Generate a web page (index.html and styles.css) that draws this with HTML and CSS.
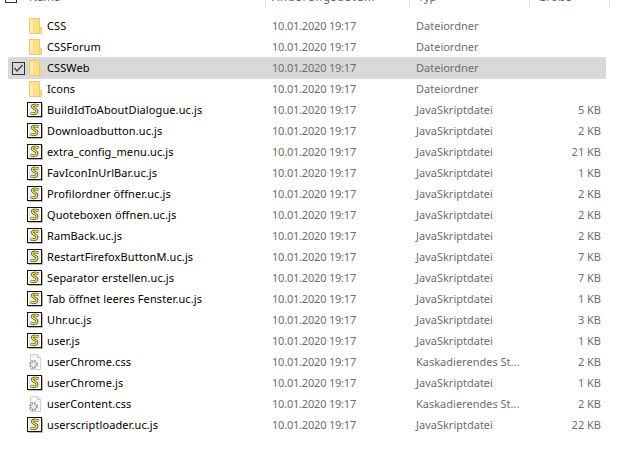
FILE: index.html
```html
<!DOCTYPE html>
<html lang="de">
<head>
    <meta charset="UTF-8">
    <title>Explorer</title>
    <link rel="stylesheet" href="styles.css">
</head>
<body>
    <svg class="defs" width="0" height="0">
        <symbol id="folder" viewBox="0 0 16 16">
            <path d="M2.500 .5H12.500V9.500H14.500V15.500H2.500Z" fill="#fde08a" stroke="#ecc870"/>
            <path d="M12.500 9.500V15.500" fill="none" stroke="#ecc870"/>
            <path d="M3 1H6V15H3Z" fill="#fee9ab"/>
        </symbol>
        <symbol id="script" viewBox="0 0 16 16">
            <rect x=".5" y=".5" width="14" height="14" fill="#fff" stroke="#111"/>
            <rect x="2" y="2" width="11" height="11" fill="#ececec"/>
            <path d="M15.500 1.500V15.500H1.500" fill="none" stroke="#b5b5b5"/>
            <path d="M11.500 3.500C8.500 2.500 5 3 5.500 5S10.500 7 10 9.500C9.500 12 6 12.500 3.500 11" fill="none" stroke="#222" stroke-width="2.600"/>
            <path d="M11.500 3.500C8.500 2.500 5 3 5.500 5S10.500 7 10 9.500C9.500 12 6 12.500 3.500 11" fill="none" stroke="#f2e84a" stroke-width="1.500"/>
        </symbol>
        <symbol id="cssfile" viewBox="0 0 16 16">
            <path d="M3.500 .5H10.500L13.500 3.500V15.500H3.500Z" fill="#f8f8f8" stroke="#cfcfcf"/>
            <path d="M10.500 .5V3.500H13.500" fill="none" stroke="#cfcfcf"/>
            <circle cx="6.500" cy="10.500" r="3.300" fill="none" stroke="#9b9b9b" stroke-width="2.400" stroke-dasharray="1.600 1"/>
            <circle cx="6.500" cy="10.500" r="1.200" fill="#e4e4e4"/>
        </symbol>
    </svg>

    <div class="list-header">
        <span class="head-check"></span>
        <span class="head-cell head-name">Name</span>
        <span class="head-cell head-date">Änderungsdatum</span>
        <span class="head-cell head-type">Typ</span>
        <span class="head-cell head-size">Größe</span>
    </div>

    <div class="file-list">
        <div class="file-row"><svg class="icon"><use href="#folder"/></svg><span class="name">CSS</span><span class="date">10.01.2020 19:17</span><span class="type">Dateiordner</span><span class="size"></span></div>
        <div class="file-row"><svg class="icon"><use href="#folder"/></svg><span class="name">CSSForum</span><span class="date">10.01.2020 19:17</span><span class="type">Dateiordner</span><span class="size"></span></div>
        <div class="file-row selected">
            <span class="check">
                <svg width="13" height="13" viewBox="0 0 13 13"><rect x=".5" y=".5" width="12" height="12" fill="none" stroke="#333"/><path d="M2.500 6L5 9L10.500 3" fill="none" stroke="#444" stroke-width="1.300"/></svg>
            </span>
            <svg class="icon"><use href="#folder"/></svg><span class="name">CSSWeb</span><span class="date">10.01.2020 19:17</span><span class="type">Dateiordner</span><span class="size"></span>
        </div>
        <div class="file-row"><svg class="icon"><use href="#folder"/></svg><span class="name">Icons</span><span class="date">10.01.2020 19:17</span><span class="type">Dateiordner</span><span class="size"></span></div>
        <div class="file-row"><svg class="icon"><use href="#script"/></svg><span class="name">BuildIdToAboutDialogue.uc.js</span><span class="date">10.01.2020 19:17</span><span class="type">JavaSkriptdatei</span><span class="size">5 KB</span></div>
        <div class="file-row"><svg class="icon"><use href="#script"/></svg><span class="name">Downloadbutton.uc.js</span><span class="date">10.01.2020 19:17</span><span class="type">JavaSkriptdatei</span><span class="size">2 KB</span></div>
        <div class="file-row"><svg class="icon"><use href="#script"/></svg><span class="name">extra_config_menu.uc.js</span><span class="date">10.01.2020 19:17</span><span class="type">JavaSkriptdatei</span><span class="size">21 KB</span></div>
        <div class="file-row"><svg class="icon"><use href="#script"/></svg><span class="name">FavIconInUrlBar.uc.js</span><span class="date">10.01.2020 19:17</span><span class="type">JavaSkriptdatei</span><span class="size">1 KB</span></div>
        <div class="file-row"><svg class="icon"><use href="#script"/></svg><span class="name">Profilordner öffner.uc.js</span><span class="date">10.01.2020 19:17</span><span class="type">JavaSkriptdatei</span><span class="size">2 KB</span></div>
        <div class="file-row"><svg class="icon"><use href="#script"/></svg><span class="name">Quoteboxen öffnen.uc.js</span><span class="date">10.01.2020 19:17</span><span class="type">JavaSkriptdatei</span><span class="size">2 KB</span></div>
        <div class="file-row"><svg class="icon"><use href="#script"/></svg><span class="name">RamBack.uc.js</span><span class="date">10.01.2020 19:17</span><span class="type">JavaSkriptdatei</span><span class="size">2 KB</span></div>
        <div class="file-row"><svg class="icon"><use href="#script"/></svg><span class="name">RestartFirefoxButtonM.uc.js</span><span class="date">10.01.2020 19:17</span><span class="type">JavaSkriptdatei</span><span class="size">7 KB</span></div>
        <div class="file-row"><svg class="icon"><use href="#script"/></svg><span class="name">Separator erstellen.uc.js</span><span class="date">10.01.2020 19:17</span><span class="type">JavaSkriptdatei</span><span class="size">7 KB</span></div>
        <div class="file-row"><svg class="icon"><use href="#script"/></svg><span class="name">Tab öffnet leeres Fenster.uc.js</span><span class="date">10.01.2020 19:17</span><span class="type">JavaSkriptdatei</span><span class="size">1 KB</span></div>
        <div class="file-row"><svg class="icon"><use href="#script"/></svg><span class="name">Uhr.uc.js</span><span class="date">10.01.2020 19:17</span><span class="type">JavaSkriptdatei</span><span class="size">3 KB</span></div>
        <div class="file-row"><svg class="icon"><use href="#script"/></svg><span class="name">user.js</span><span class="date">10.01.2020 19:17</span><span class="type">JavaSkriptdatei</span><span class="size">1 KB</span></div>
        <div class="file-row"><svg class="icon"><use href="#cssfile"/></svg><span class="name">userChrome.css</span><span class="date">10.01.2020 19:17</span><span class="type">Kaskadierendes St...</span><span class="size">2 KB</span></div>
        <div class="file-row"><svg class="icon"><use href="#script"/></svg><span class="name">userChrome.js</span><span class="date">10.01.2020 19:17</span><span class="type">JavaSkriptdatei</span><span class="size">1 KB</span></div>
        <div class="file-row"><svg class="icon"><use href="#cssfile"/></svg><span class="name">userContent.css</span><span class="date">10.01.2020 19:17</span><span class="type">Kaskadierendes St...</span><span class="size">2 KB</span></div>
        <div class="file-row"><svg class="icon"><use href="#script"/></svg><span class="name">userscriptloader.uc.js</span><span class="date">10.01.2020 19:17</span><span class="type">JavaSkriptdatei</span><span class="size">22 KB</span></div>
    </div>
</body>
</html>
```

FILE: styles.css
```css
html, body {
    height: 100%;
}

body {
    margin: 0;
    overflow: hidden;
    background-color: #fff;
    color: #000;
    font-family: "Noto Sans", "Open Sans", sans-serif;
    font-size: 11px;
}

.defs {
    display: block;
    height: 0;
}

/* header is cut by the top of the shot, only the bottom of it shows */
.list-header {
    display: flex;
    height: 8px;
    color: #4c607a;
    line-height: 14px;
}

.head-check {
    width: 12px;
    height: 3px;
    margin-left: 5px;
    flex: none;
    border: 1px solid #333;
    border-top: none;
    box-sizing: border-box;
}

.head-cell {
    display: flex;
    align-items: flex-end;
    height: 8px;
    flex: none;
    box-sizing: border-box;
    border-right: 1px solid #e5e5e5;
    padding: 0 0 4px 6px;
    white-space: nowrap;
}

.head-name {
    width: 249px;
    padding-left: 12px;
}

.head-date {
    width: 144px;
    letter-spacing: .9px;
}

.head-type {
    width: 120px;
    padding-left: 8px;
}

.head-size {
    width: 80px;
    padding-left: 8px;
    letter-spacing: .3px;
}

.file-list {
    margin: 7px 0 0 8px;
    width: 598px;
}

.file-row {
    display: grid;
    grid-template-columns: 39px 225px 144px 1fr 50px;
    align-items: center;
    position: relative;
    height: 21px;
}

.file-row.selected {
    height: 22px;
    margin-bottom: -1px;
    padding-bottom: 1px;
    box-sizing: border-box;
    background-color: #d9d9d9;
}

.check {
    position: absolute;
    left: 4px;
    top: 5px;
    height: 13px;
}

.icon {
    width: 16px;
    height: 16px;
    margin-left: 19px;
    grid-column: 1;
}

.name {
    white-space: nowrap;
    letter-spacing: .1px;
}

.date, .type, .size {
    color: #6d6d6d;
    white-space: nowrap;
}

.date {
    letter-spacing: -.2px;
}

.size {
    text-align: right;
    padding-right: 5px;
}
```
